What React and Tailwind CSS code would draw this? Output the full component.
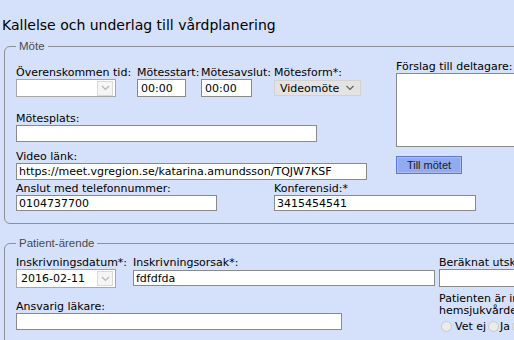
import React from "react";

function Chevron({ color = "#b5b5b5", w = 9 }) {
  return (
    <svg width={w} height="6" viewBox="0 0 9 6" fill="none">
      <path d="M1 1 L4.5 4.5 L8 1" stroke={color} strokeWidth="1.2" />
    </svg>
  );
}

function DropSel({ value, className }) {
  return (
    <div className={"flex items-center justify-between border border-[#a7a7a7] bg-white " + className}>
      <span className="pl-[4px] whitespace-nowrap">{value}</span>
      <span className="mr-[2px] flex h-[15px] w-[16px] items-center justify-center border border-[#dadada] bg-[#f5f5f5]">
        <Chevron />
      </span>
    </div>
  );
}

function Field({ value = "", className }) {
  return (
    <input
      readOnly
      value={value}
      className={"block border border-[#8a8a8a] bg-white px-[2px] text-[11px] text-black outline-none " + className}
    />
  );
}

function Radio() {
  return <span className="inline-block h-[11px] w-[11px] rounded-full border border-[#c8c8c8] bg-[#ebebeb]" />;
}

export default function App() {
  return (
    <div className="h-[340px] w-[514px] overflow-hidden bg-[#d5e1fa] font-['DejaVu_Sans',Verdana,sans-serif] text-[11px] leading-[13px] text-black">
      <div className="w-[760px]">
        <h1 className="pl-[2px] pt-[17px] text-[14px] leading-[17px] font-normal">
          Kallelse och underlag till vårdplanering
        </h1>

        <fieldset className="ml-[4px] mt-[6px] rounded-[6px] border border-[#8d9096] pb-[12px] pl-[11px] pr-0 pt-0">
          <legend className="ml-0 px-[3px] font-['Liberation_Sans',Arial,sans-serif] text-[11.5px] leading-[13px] text-[#4a4a4a]">
            Möte
          </legend>
          <div className="flex">
            <div className="w-[380px]">
              <div className="mt-[13px] flex">
                <div className="w-[121px]">
                  <div className="whitespace-nowrap">Överenskommen tid:</div>
                  <DropSel value="" className="h-[18px] w-[100px]" />
                </div>
                <div className="w-[64px]">
                  <div className="whitespace-nowrap">Mötesstart:</div>
                  <Field value="00:00" className="h-[18px] w-[49px] pl-[3px]" />
                </div>
                <div className="w-[73px]">
                  <div className="whitespace-nowrap">Mötesavslut:</div>
                  <Field value="00:00" className="h-[18px] w-[51px] pl-[3px]" />
                </div>
                <div>
                  <div className="whitespace-nowrap">Mötesform*:</div>
                  <div className="mt-[1px] flex h-[16px] w-[87px] items-center justify-between border border-[#d2d2d2] bg-[#e3e3e3]">
                    <span className="pl-[5px]">Videomöte</span>
                    <span className="mr-[5px] flex items-center">
                      <Chevron color="#606060" w={10} />
                    </span>
                  </div>
                </div>
              </div>
              <div className="mt-[15px]">Mötesplats:</div>
              <Field className="h-[17px] w-[301px]" />
              <div className="mt-[8px]">Video länk:</div>
              <Field value="https://meet.vgregion.se/katarina.amundsson/TQJW7KSF" className="h-[17px] w-[351px]" />
            </div>
            <div>
              <div className="mt-[7px] whitespace-nowrap">Förslag till deltagare:</div>
              <textarea readOnly className="block h-[74px] w-[200px] resize-none border border-[#8a8a8a] bg-white outline-none" />
              <button className="mt-[9px] flex h-[18px] w-[66px] items-center justify-center border border-[#5a7ad2] bg-[#93abee] font-['Liberation_Sans',Arial,sans-serif] text-[11px] text-[#1a1a1a] shadow-[inset_0_0_0_1px_#a9bdf3]">
                Till mötet
              </button>
            </div>
          </div>
          <div className="mt-[2px] flex">
            <div className="w-[258px]">
              <div className="whitespace-nowrap">Anslut med telefonnummer:</div>
              <Field value="0104737700" className="h-[16px] w-[201px]" />
            </div>
            <div>
              <div className="whitespace-nowrap">Konferensid:*</div>
              <Field value="3415454541" className="h-[16px] w-[202px]" />
            </div>
          </div>
        </fieldset>

        <fieldset className="ml-[4px] mt-[13px] rounded-[6px] border border-[#8d9096] pb-[40px] pl-[11px] pr-0 pt-0">
          <legend className="ml-0 px-[3px] font-['Liberation_Sans',Arial,sans-serif] text-[11.5px] leading-[13px] text-[#4a4a4a]">
            Patient-ärende
          </legend>
          <div className="flex">
            <div className="w-[423px]">
              <div className="mt-[6px] flex">
                <div className="w-[117px]">
                  <div className="whitespace-nowrap">Inskrivningsdatum*:</div>
                  <DropSel value="2016-02-11" className="h-[19px] w-[100px]" />
                </div>
                <div>
                  <div className="whitespace-nowrap">Inskrivningsorsak*:</div>
                  <Field value="fdfdfda" className="mt-[1px] h-[16px] w-[302px]" />
                </div>
              </div>
              <div className="mt-[12px]">Ansvarig läkare:</div>
              <Field className="h-[17px] w-[326px]" />
            </div>
            <div>
              <div className="mt-[6px] whitespace-nowrap">Beräknat utskrivningsdatum:</div>
              <Field className="h-[18px] w-[200px]" />
              <div className="mt-[6px] whitespace-nowrap leading-[12px]">
                Patienten är inskriven i
                <br />
                hemsjukvården:
              </div>
              <div className="mt-[3px] flex items-center">
                <span className="ml-[2px] flex items-center"><Radio /></span>
                <span className="ml-[3px]">Vet ej</span>
                <span className="ml-[2px] flex items-center"><Radio /></span>
                <span className="ml-[1px]">Ja</span>
                <span className="ml-[2px] flex items-center"><Radio /></span>
                <span className="ml-[1px]">Nej</span>
              </div>
            </div>
          </div>
        </fieldset>
      </div>
    </div>
  );
}
